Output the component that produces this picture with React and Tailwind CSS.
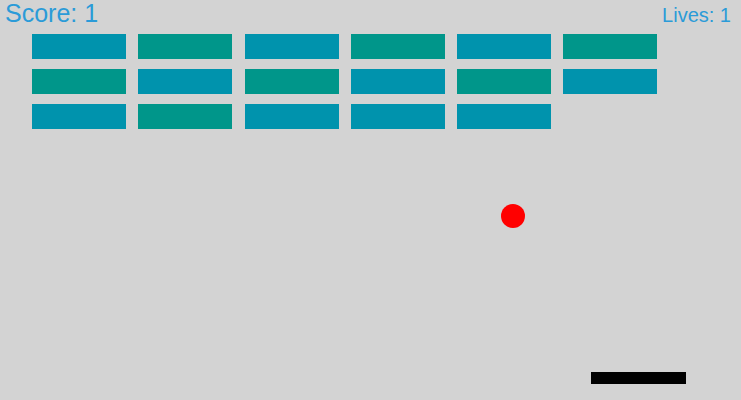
import React from "react";

const B = "bg-[#0093ad]";
const G = "bg-[#00968a]";

const rows = [
  [B, G, B, G, B, G],
  [G, B, G, B, G, B],
  [B, G, B, B, B, null],
];

export default function App() {
  return (
    <div
      className="relative w-[741px] h-[400px] overflow-hidden bg-[#d3d3d3]"
      style={{ fontFamily: '"Liberation Sans", Arial, sans-serif' }}
    >
      <div className="pt-[34px] pl-[32px]">
        <div className="grid grid-cols-[repeat(6,94px)] gap-x-[12.3px] gap-y-[10px]">
          {rows.flatMap((row, r) =>
            row.map((c, i) => (
              <div key={`${r}-${i}`} className={`h-[25px] w-[94px] ${c ? c : ""}`} />
            ))
          )}
        </div>
      </div>

      <div className="absolute left-[5px] top-[1px] text-[25px] leading-none text-[#2b9bd8]">
        Score: 1
      </div>
      <div className="absolute right-[10px] top-[5px] text-[20px] leading-none text-[#2b9bd8]">
        Lives: 1
      </div>

      <div className="absolute left-[501px] top-[204px] w-[24px] h-[24px] rounded-full bg-[#ff0000]" />
      <div className="absolute left-[591px] top-[372px] w-[95px] h-[12px] bg-black" />
    </div>
  );
}
